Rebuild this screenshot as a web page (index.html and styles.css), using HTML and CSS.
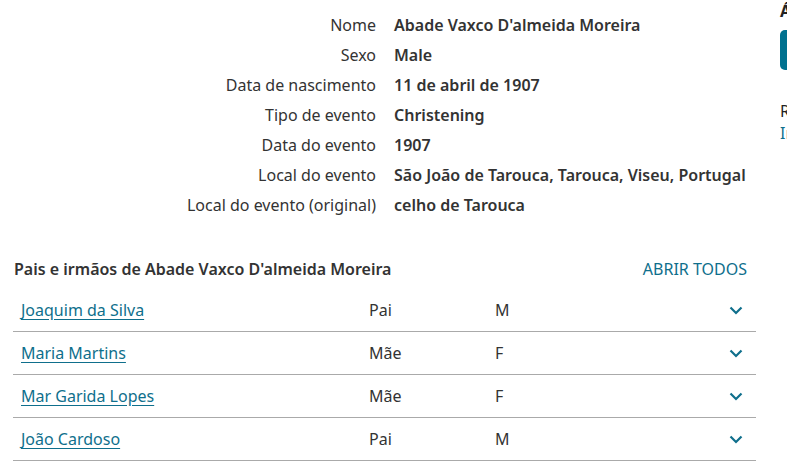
FILE: index.html
```html
<!DOCTYPE html>
<html lang="pt">
<head>
<meta charset="utf-8">
<link rel="stylesheet" href="styles.css">
</head>
<body>
<div class="page">
  <main class="main">
    <dl class="details">
      <dt>Nome</dt><dd>Abade Vaxco D'almeida Moreira</dd>
      <dt>Sexo</dt><dd>Male</dd>
      <dt>Data de nascimento</dt><dd>11 de abril de 1907</dd>
      <dt>Tipo de evento</dt><dd>Christening</dd>
      <dt>Data do evento</dt><dd>1907</dd>
      <dt>Local do evento</dt><dd>São João de Tarouca, Tarouca, Viseu, Portugal</dd>
      <dt>Local do evento (original)</dt><dd>celho de Tarouca</dd>
    </dl>
    <section class="family">
      <div class="family-head">
        <h2>Pais e irmãos de Abade Vaxco D'almeida Moreira</h2>
        <a class="open-all" href="#">ABRIR TODOS</a>
      </div>
      <div class="row">
        <a class="name" href="#">Joaquim da Silva</a><span class="rel">Pai</span><span class="sex">M</span>
        <svg class="chev" viewBox="0 0 14 9" width="14" height="9"><path d="M1.5 1.5 L7 7 L12.5 1.5" fill="none" stroke="#0f6f8c" stroke-width="2.2"/></svg>
      </div>
      <div class="row">
        <a class="name" href="#">Maria Martins</a><span class="rel">Mãe</span><span class="sex">F</span>
        <svg class="chev" viewBox="0 0 14 9" width="14" height="9"><path d="M1.5 1.5 L7 7 L12.5 1.5" fill="none" stroke="#0f6f8c" stroke-width="2.2"/></svg>
      </div>
      <div class="row">
        <a class="name" href="#">Mar Garida Lopes</a><span class="rel">Mãe</span><span class="sex">F</span>
        <svg class="chev" viewBox="0 0 14 9" width="14" height="9"><path d="M1.5 1.5 L7 7 L12.5 1.5" fill="none" stroke="#0f6f8c" stroke-width="2.2"/></svg>
      </div>
      <div class="row">
        <a class="name" href="#">João Cardoso</a><span class="rel">Pai</span><span class="sex">M</span>
        <svg class="chev" viewBox="0 0 14 9" width="14" height="9"><path d="M1.5 1.5 L7 7 L12.5 1.5" fill="none" stroke="#0f6f8c" stroke-width="2.2"/></svg>
      </div>
    </section>
  </main>
  <aside class="side">
    <div class="side-title">Árvore</div>
    <div class="side-btn"></div>
    <div class="side-sub">Registros</div>
    <div class="side-link">Imagem</div>
  </aside>
</div>
</body>
</html>
```

FILE: styles.css
```css
* { box-sizing: border-box; }
html, body { margin: 0; padding: 0; overflow: hidden; }
body {
  font-family: "Noto Sans", "Open Sans", sans-serif;
  font-size: 16px;
  color: #333;
  background: #fff;
}
.page {
  display: flex;
  width: 787px;
  height: 469px;
  overflow: hidden;
}
.main {
  flex: 0 0 780px;
  padding-top: 10px;
}
.details {
  display: grid;
  grid-template-columns: 376px auto;
  column-gap: 18px;
  margin: 0;
}
.details dt {
  text-align: right;
  line-height: 30px;
  color: #333;
}
.details dd {
  margin: 0;
  line-height: 30px;
  font-weight: 600;
  color: #333;
}
.family {
  margin: 37px 24px 0 13px;
}
.family-head {
  display: flex;
  justify-content: space-between;
  align-items: center;
  padding: 0 9px 0 1px;
  height: 24px;
  margin-bottom: 8px;
}
.family-head h2 {
  margin: 0;
  font-size: 16px;
  font-weight: 600;
  color: #333;
}
.open-all {
  color: #0f6f8c;
  text-decoration: none;
  font-size: 16px;
}
.row {
  display: flex;
  align-items: center;
  height: 43px;
  border-bottom: 1.5px solid #aaa;
  padding-left: 8px;
}
.name {
  flex: 0 0 348px;
  color: #0f6f8c;
  text-decoration: underline;
  text-underline-offset: 3px;
}
.rel { flex: 0 0 126px; }
.sex { flex: 1 1 auto; }
.chev { margin-right: 13px; }
.side {
  flex: 0 0 200px;
}
.side-title {
  font-weight: 700;
  font-size: 16px;
  line-height: 22px;
  color: #222;
}
.side-btn {
  margin-top: 8px;
  height: 40px;
  width: 180px;
  background: #00718f;
  border-radius: 5px;
}
.side-sub {
  margin-top: 30px;
  font-size: 16px;
  line-height: 22px;
  color: #222;
}
.side-link {
  font-size: 16px;
  color: #0f6f8c;
  line-height: 22px;
}
```
